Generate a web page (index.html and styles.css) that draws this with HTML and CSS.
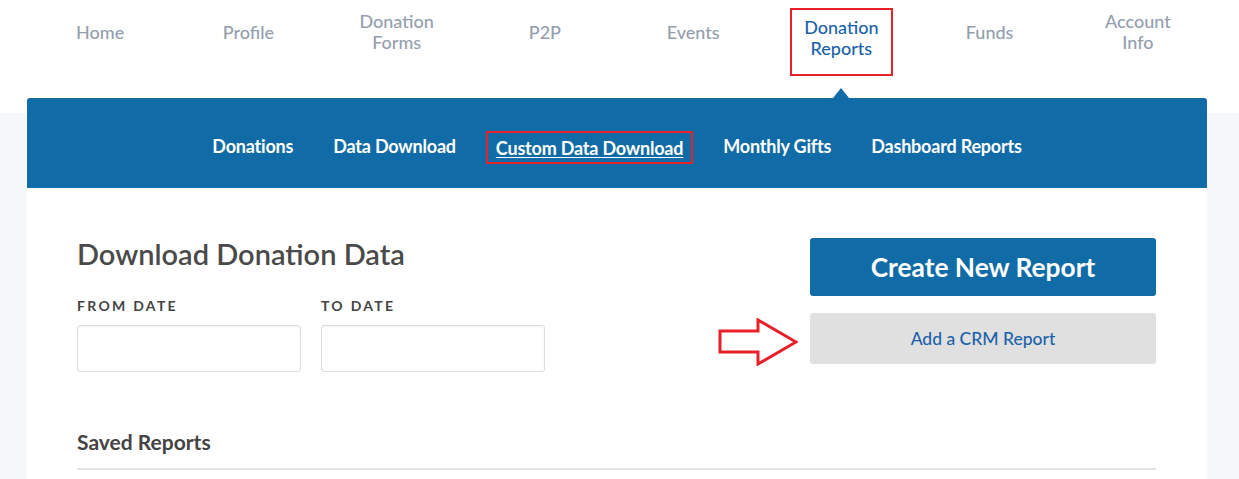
FILE: index.html
```html
<!DOCTYPE html>
<html lang="en">
<head>
    <meta charset="UTF-8">
    <title>Donation Reports - Custom Data Download</title>
    <link rel="stylesheet" href="styles.css">
</head>
<body>
    <nav class="topnav">
        <a class="topnav-item">Home</a>
        <a class="topnav-item">Profile</a>
        <a class="topnav-item">Donation<br>Forms</a>
        <a class="topnav-item">P2P</a>
        <a class="topnav-item">Events</a>
        <a class="topnav-item active"><span class="mark-box">Donation<br>Reports</span></a>
        <a class="topnav-item">Funds</a>
        <a class="topnav-item">Account<br>Info</a>
    </nav>

    <div class="panel">
        <div class="subnav">
            <a class="subnav-item">Donations</a>
            <a class="subnav-item">Data Download</a>
            <a class="subnav-item current"><span class="mark-box">Custom Data Download</span></a>
            <a class="subnav-item">Monthly Gifts</a>
            <a class="subnav-item">Dashboard Reports</a>
        </div>

        <div class="content">
            <div class="download-row">
                <div class="download-form">
                    <h1>Download Donation Data</h1>
                    <div class="date-fields">
                        <div class="field">
                            <label>FROM DATE</label>
                            <input type="text" class="date-input">
                        </div>
                        <div class="field">
                            <label>TO DATE</label>
                            <input type="text" class="date-input">
                        </div>
                    </div>
                </div>
                <div class="actions">
                    <button class="btn-primary">Create New Report</button>
                    <div class="crm-wrap">
                        <svg class="arrow" width="80" height="48" viewBox="0 0 80 48">
                            <polygon points="2,13 40,13 40,2 78,24 40,46 40,34 2,34" fill="none" stroke="#e8202a" stroke-width="3"/>
                        </svg>
                        <button class="btn-secondary">Add a CRM Report</button>
                    </div>
                </div>
            </div>

            <h2 class="saved-title">Saved Reports</h2>
        </div>
    </div>
</body>
</html>
```

FILE: styles.css
```css
body {
    margin: 0;
    font-family: Lato, 'Open Sans', sans-serif;
    background: linear-gradient(#ffffff 113px, #f6f7f9 113px);
    min-height: 100vh;
}
.topnav {
    display: flex;
    margin-left: 26px;
    width: 1186px;
    height: 98px;
}
.topnav-item {
    flex: 1;
    height: 64px;
    display: flex;
    align-items: center;
    justify-content: center;
    text-align: center;
    font-size: 18px;
    font-weight: 500;
    line-height: 21px;
    color: #949eae;
    position: relative;
}
.topnav-item.active {
    color: #1b62a8;
    align-items: flex-start;
    height: 98px;
}
.topnav-item.active .mark-box {
    margin-top: 8px;
    padding: 7px 12px 15px;
}
.topnav-item.active::after {
    content: '';
    position: absolute;
    bottom: 0;
    left: 50%;
    margin-left: -8px;
    border-left: 8px solid transparent;
    border-right: 8px solid transparent;
    border-bottom: 10px solid #106ba6;
}
.mark-box {
    border: 2px solid #e8202a;
}
.panel {
    margin-left: 27px;
    width: 1180px;
}
.subnav {
    background: #106ba6;
    border-radius: 3px 3px 0 0;
    height: 90px;
    box-sizing: border-box;
    padding-top: 37px;
    display: flex;
    justify-content: center;
    gap: 40px;
}
.subnav-item {
    color: #ffffff;
    font-size: 18px;
    font-weight: 700;
    line-height: 22px;
    letter-spacing: -0.2px;
}
.subnav-item.current .mark-box {
    display: inline-block;
    margin: -4px -10px 0;
    padding: 4px 8px 3px;
    text-decoration: underline;
    text-underline-offset: 2px;
}
.content {
    background: #ffffff;
    padding: 50px 51px 10px 50px;
}
.download-row {
    display: flex;
    justify-content: space-between;
}
h1 {
    margin: 0;
    font-size: 29px;
    line-height: 32px;
    font-weight: 600;
    color: #4a4a4a;
}
.date-fields {
    display: flex;
    gap: 20px;
    margin-top: 26px;
}
.field label {
    display: block;
    font-size: 14px;
    font-weight: 700;
    letter-spacing: 2.3px;
    line-height: 20px;
    color: #444444;
    margin-bottom: 9px;
}
.date-input {
    display: block;
    width: 224px;
    height: 47px;
    box-sizing: border-box;
    border: 1px solid #dddddd;
    border-radius: 3px;
    box-shadow: inset 0 1px 2px rgba(0,0,0,0.05);
    margin: 0;
}
.actions {
    width: 346px;
    display: flex;
    flex-direction: column;
    gap: 17px;
}
.btn-primary {
    height: 58px;
    border: none;
    border-radius: 3px;
    background: #106ba6;
    color: #ffffff;
    font-family: inherit;
    font-size: 26.3px;
    font-weight: 700;
}
.crm-wrap {
    position: relative;
}
.btn-secondary {
    width: 100%;
    height: 51px;
    border: none;
    border-radius: 3px;
    background: #e0e0e0;
    color: #1b62a8;
    font-family: inherit;
    font-size: 17.5px;
    font-weight: 500;
}
.arrow {
    position: absolute;
    right: calc(100% + 12px);
    top: 5px;
}
.saved-title {
    margin: 58px 0 0;
    font-size: 21px;
    font-weight: 700;
    line-height: 24px;
    color: #444444;
    padding-bottom: 14px;
    border-bottom: 2px solid #e2e2e2;
}
```
